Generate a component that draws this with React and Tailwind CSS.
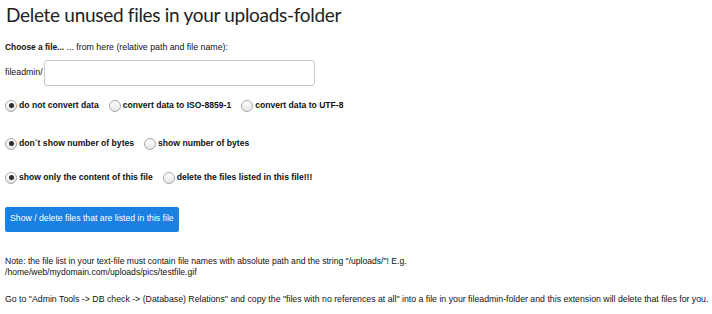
import React from "react";

function Radio({ checked, label }) {
  return (
    <label className="flex items-center gap-[2px]">
      <span className="flex h-[12px] w-[12px] shrink-0 items-center justify-center rounded-full border border-[#a9a9a9] bg-gradient-to-b from-[#ffffff] to-[#e6e6e6]">
        {checked && <span className="h-[5px] w-[5px] rounded-full bg-[#2b2b2b]" />}
      </span>
      <span className="font-bold">{label}</span>
    </label>
  );
}

function RadioRow({ items, className }) {
  return (
    <div className={`flex items-center gap-[10px] ${className}`}>
      {items.map((item) => (
        <Radio key={item.label} checked={item.checked} label={item.label} />
      ))}
    </div>
  );
}

export default function App() {
  return (
    <div className="h-[314px] w-[712px] bg-white px-[5px] font-['Liberation_Sans',Arial,sans-serif] text-[8.6px] leading-[11.5px] text-[#111]">
      <h1 className="pl-px pt-[1px] font-['Lato',sans-serif] text-[19px] leading-[27px] tracking-[-0.3px] text-[#222]">
        Delete unused files in your uploads-folder
      </h1>

      <p className="mt-[14px] text-[8.8px]">
        <span className="text-[8.4px] font-bold">Choose a file...</span> ... from here (relative path and file name):
      </p>

      <div className="mt-[6px] flex items-center gap-px">
        <span className="text-[8.8px]">fileadmin/</span>
        <input
          type="text"
          className="h-[26px] w-[271px] rounded-[3px] border border-[#c8c8c8] bg-white px-2 outline-none"
        />
      </div>

      <RadioRow
        className="mt-[14px]"
        items={[
          { label: "do not convert data", checked: true },
          { label: "convert data to ISO-8859-1" },
          { label: "convert data to UTF-8" },
        ]}
      />

      <RadioRow
        className="mt-[26px]"
        items={[
          { label: "don´t show number of bytes", checked: true },
          { label: "show number of bytes" },
        ]}
      />

      <RadioRow
        className="mt-[22px]"
        items={[
          { label: "show only the content of this file", checked: true },
          { label: "delete the files listed in this file!!!" },
        ]}
      />

      <button
        type="button"
        className="mt-[23px] h-[25px] rounded-[2px] bg-[#1a80e2] px-[5px] text-[8.7px] text-white"
      >
        Show / delete files that are listed in this file
      </button>

      <p className="mt-[24px]">
        Note: the file list in your text-file must contain file names with absolute path and the string "/uploads/"! E.g.
        <br />
        /home/web/mydomain.com/uploads/pics/testfile.gif
      </p>

      <p className="mt-[15px] whitespace-nowrap text-[8.75px]">
        Go to "Admin Tools -&gt; DB check -&gt; (Database) Relations" and copy the "files with no references at all" into a file in your
        fileadmin-folder and this extension will delete that files for you.
      </p>
    </div>
  );
}
